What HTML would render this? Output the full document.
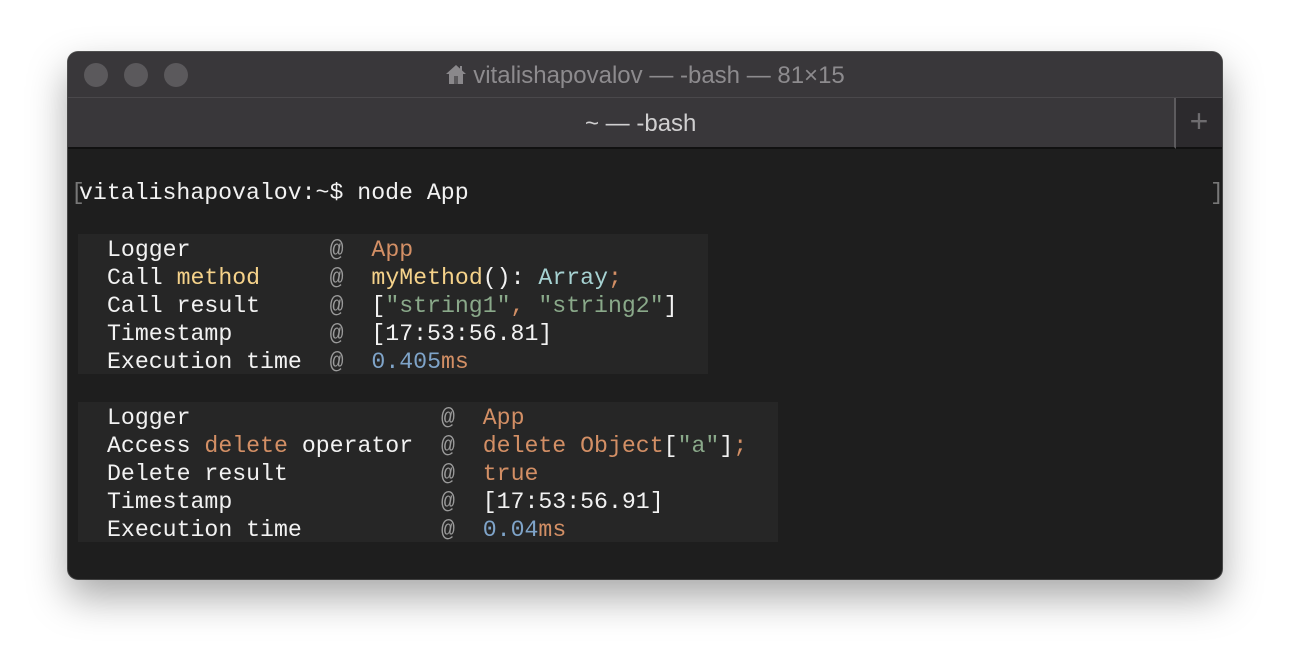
<!DOCTYPE html>
<html><head><style>
body{margin:0;width:1290px;height:664px;background:#fff;overflow:hidden;position:relative;font-family:"Liberation Sans",sans-serif}
.win{position:absolute;left:68px;top:52px;width:1154px;height:527px;border-radius:10px;background:#1e1e1e;box-shadow:0 18px 40px rgba(0,0,0,.35),0 0 0 1px #555;overflow:hidden}
.title{position:absolute;left:0;top:0;width:100%;height:45px;background:#39373a;border-bottom:1px solid #4a484b;color:#8d8b8e;font-size:24px;text-align:center;line-height:47px}
.dot{position:absolute;top:11px;width:24px;height:24px;border-radius:50%;background:#5b595c}
.tab{position:absolute;left:0;top:46px;width:1106px;height:49px;background:#39373a;border-bottom:2px solid #111;color:#d0cfd0;font-size:24px;line-height:52px;border-right:2px solid #5d5b5e}
.plus{position:absolute;left:1108px;top:46px;width:46px;height:49px;background:#2c2a2d;border-bottom:2px solid #111;color:#6e6c6f;font-size:32px;text-align:center;line-height:46px}
.mono{font-family:"Liberation Mono",monospace;font-size:23.2px;line-height:28px;color:#f2f2f2;white-space:pre;position:absolute}
.blk{position:absolute;background:#262626}
.o{color:#d38f65}.y{color:#f5d28a}.c{color:#a6d2d2}.g{color:#8aa98a}.b{color:#7fa4c9}.a{color:#9a9a9a}
</style></head><body>
<div class="win">
<div class="title"><span class="dot" style="left:16px"></span><span class="dot" style="left:56px"></span><span class="dot" style="left:96px"></span>
<svg width="22" height="22" viewBox="0 0 22 22" style="vertical-align:-2px;margin-right:6px"><path d="M1 11 L11 2 L21 11 L18 11 L18 21 L4 21 L4 11 Z" fill="#8a888b"/><rect x="9" y="13" width="4" height="8" fill="#5a585b"/><rect x="15" y="3" width="2" height="5" fill="#8a888b"/></svg>vitalishapovalov — -bash — 81×15</div>
<div class="tab"><span style="position:absolute;left:517px">~ — -bash</span></div>
<div class="plus">+</div>
<div class="mono" style="left:3px;top:127px;color:#777">[</div>
<div class="mono" style="left:11px;top:127px">vitalishapovalov:~$ node App</div>
<div class="mono" style="left:1142px;top:127px;color:#777">]</div>
<div class="blk" style="left:10px;top:182px;width:630px;height:140px"></div>
<div class="mono" style="left:39px;top:184px">Logger          <span class="a">@</span>  <span class="o">App</span>
Call <span class="y">method</span>     <span class="a">@</span>  <span class="y">myMethod</span>(): <span class="c">Array</span><span class="o">;</span>
Call result     <span class="a">@</span>  [<span class="g">"string1"</span><span class="o">,</span> <span class="g">"string2"</span>]
Timestamp       <span class="a">@</span>  [17:53:56.81]
Execution time  <span class="a">@</span>  <span class="b">0.405</span><span class="o">ms</span></div>
<div class="blk" style="left:10px;top:350px;width:700px;height:140px"></div>
<div class="mono" style="left:39px;top:352px">Logger                  <span class="a">@</span>  <span class="o">App</span>
Access <span class="o">delete</span> operator  <span class="a">@</span>  <span class="o">delete Object</span>[<span class="g">"a"</span>]<span class="o">;</span>
Delete result           <span class="a">@</span>  <span class="o">true</span>
Timestamp               <span class="a">@</span>  [17:53:56.91]
Execution time          <span class="a">@</span>  <span class="b">0.04</span><span class="o">ms</span></div>
</div>
</body></html>
